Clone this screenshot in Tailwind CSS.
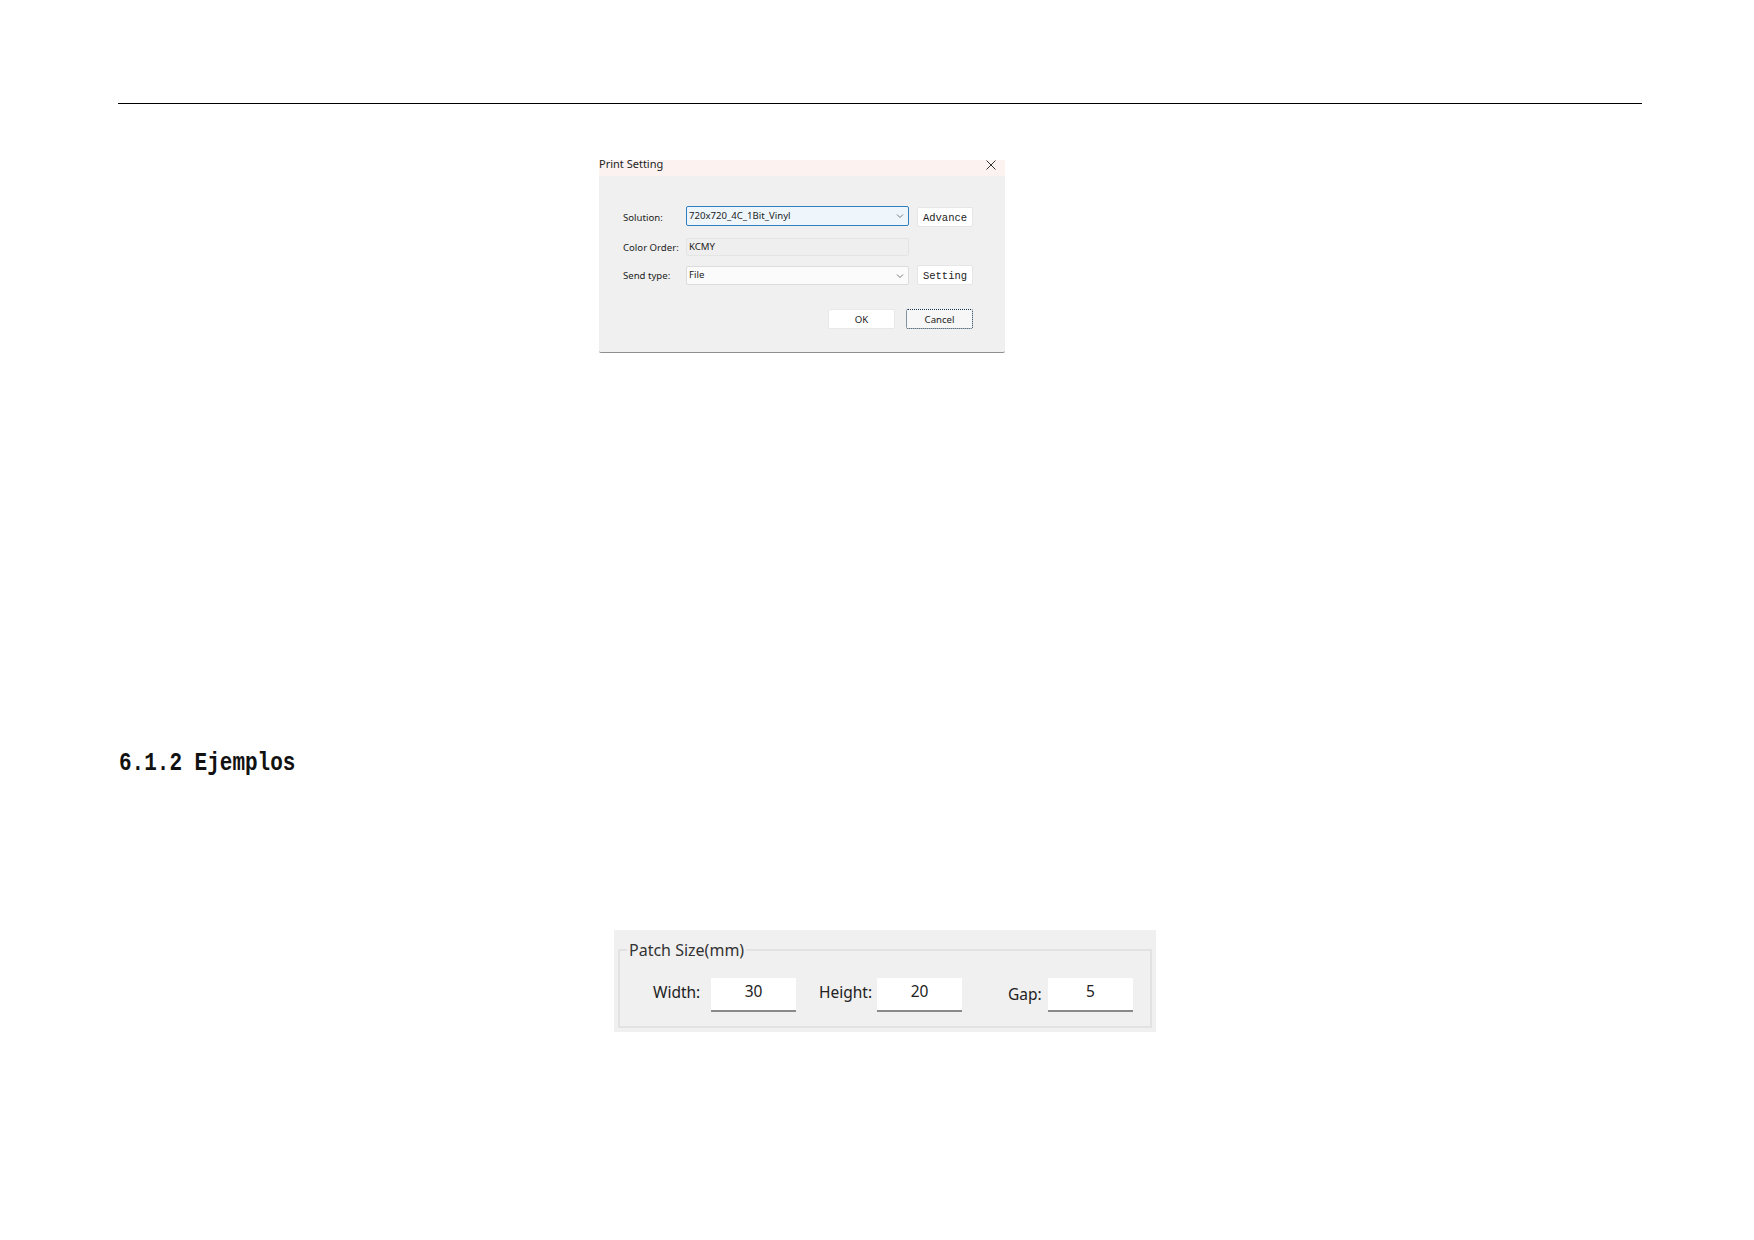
<!DOCTYPE html>
<html lang="en">
<head>
    <meta charset="UTF-8">
    <title>Print Setting - Ejemplos</title>
    <script src="https://cdn.jsdelivr.net/npm/@tailwindcss/browser@4"></script>
</head>
<body class="bg-white font-['Noto_Sans',sans-serif] text-[#222]">
    <div class="w-[1754px] h-[1240px] overflow-hidden">
        <!-- page header rule -->
        <div class="ml-[118px] mt-[103px] w-[1524px] h-px bg-black"></div>

        <!-- print setting dialog -->
        <div class="ml-[599px] mt-[56px] w-[406px] h-[193px] bg-[#f0f0f0] border-b border-[#8f8f8f] rounded-b-[2px]">
            <div class="h-4 bg-[#fcf3f1] flex items-start justify-between pr-[10px] text-[11px]">
                <span class="leading-3 -mt-[2px]">Print Setting</span>
                <svg class="w-[10px] h-[10px] -mr-px" viewBox="0 0 10 10" fill="none" stroke="#333" stroke-width="1"><path d="M0.5 0.5 9.5 9.5M9.5 0.5 0.5 9.5"/></svg>
            </div>

            <div class="pl-6 pr-8 pt-[30px] text-[9.6px]">
                <div class="flex items-start h-5">
                    <span class="w-[63px] shrink-0 mt-1 leading-4">Solution:</span>
                    <div class="w-[223px] shrink-0 h-5 flex items-center justify-between pl-[2px] pr-[3px] bg-[#eef6fc] border border-[#2f7fbd] rounded-[2px]">
                        <span>720x720_4C_1Bit_Vinyl</span>
                        <svg class="w-2 h-2 mr-[1px]" viewBox="0 0 8 8" fill="none" stroke="#777" stroke-width="1"><path d="M1 2.5 4 5.5 7 2.5"/></svg>
                    </div>
                    <button class="ml-2 mt-px w-14 h-5 pt-[3px] bg-white border border-[#e6e6e6] rounded-[2px] font-['Liberation_Mono',monospace] text-[10.5px]">Advance</button>
                </div>
                <div class="flex items-center h-[18px] mt-3">
                    <span class="w-[63px] shrink-0 pt-[2px]">Color Order:</span>
                    <div class="w-[223px] shrink-0 h-[18px] flex items-center pl-[2px] bg-[#efefef] border border-[#e4e4e4] rounded-[2px]">KCMY</div>
                </div>
                <div class="flex items-end h-5 mt-[9px]">
                    <span class="w-[63px] shrink-0 mb-[1px] leading-4">Send type:</span>
                    <div class="w-[223px] shrink-0 h-[19px] flex items-center justify-between pl-[2px] pr-[3px] bg-[#fbfbfb] border border-[#dcdcdc] rounded-[2px]">
                        <span>File</span>
                        <svg class="w-2 h-2 mr-[1px]" viewBox="0 0 8 8" fill="none" stroke="#777" stroke-width="1"><path d="M1 2.5 4 5.5 7 2.5"/></svg>
                    </div>
                    <button class="ml-2 w-14 h-5 pt-[3px] bg-white border border-[#e6e6e6] rounded-[2px] font-['Liberation_Mono',monospace] text-[10.5px]">Setting</button>
                </div>
                <div class="flex justify-end gap-[11px] mt-6">
                    <button class="w-[67px] h-5 pt-[2px] bg-white border border-[#e8e8e8] rounded-[2px]">OK</button>
                    <button class="w-[67px] h-5 pt-[2px] bg-[#f7f7f7] border border-dotted border-[#0f2f4a] rounded-[2px]">Cancel</button>
                </div>
            </div>
        </div>

        <!-- section heading -->
        <h2 class="ml-[119px] mt-[397px] h-7 leading-7 font-['Liberation_Mono',monospace] font-bold text-[21px] text-[#111] scale-y-[1.25] origin-center">6.1.2 Ejemplos</h2>

        <!-- patch size panel -->
        <div class="ml-[614px] mt-[152px] w-[542px] h-[102px] bg-[#f0f0f0] pl-[4px] pr-[4px] pt-[19px] text-[15.5px]">
            <div class="relative h-[79px] border-2 border-[#e2e2e2] pt-[27px] flex items-start">
                <span class="absolute left-[7px] -top-[11px] bg-[#f0f0f0] px-[2px] leading-5 text-[16px] text-[#333]">Patch Size(mm)</span>
                <span class="ml-[33px] w-[58px] shrink-0 mt-[2px] leading-6">Width:</span>
                <div class="w-[85px] shrink-0 h-[34px] bg-white border-b-2 border-[#8a8a8a] text-center leading-[26px]">30</div>
                <span class="ml-[23px] w-[58px] shrink-0 mt-[2px] leading-6">Height:</span>
                <div class="w-[85px] shrink-0 h-[34px] bg-white border-b-2 border-[#8a8a8a] text-center leading-[26px]">20</div>
                <span class="ml-[46px] w-10 shrink-0 mt-1 leading-6">Gap:</span>
                <div class="w-[85px] shrink-0 h-[34px] bg-white border-b-2 border-[#8a8a8a] text-center leading-[26px]">5</div>
            </div>
        </div>
    </div>
</body>
</html>
